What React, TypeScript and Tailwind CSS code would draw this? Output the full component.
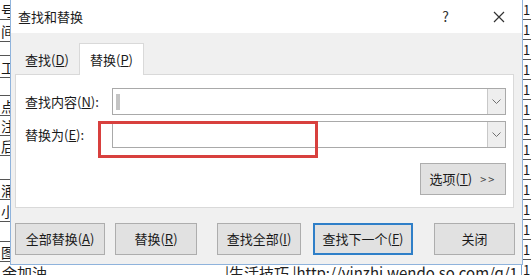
import React from 'react';

const font = { fontFamily: '"Noto Sans CJK SC", "Noto Sans", sans-serif' };

const leftRows = [
  { ch: '号', h: 'h-[20px]' },
  { ch: '间', h: 'h-[22px]' },
  { ch: '', h: 'h-[14px]' },
  { ch: '工', h: 'h-[22px]' },
  { ch: '', h: 'h-[18px]' },
  { ch: '点', h: 'h-[20px]' },
  { ch: '注', h: 'h-[20px]' },
  { ch: '后', h: 'h-[20px]' },
  { ch: '', h: 'h-[24px]' },
  { ch: '涌', h: 'h-[20px]' },
  { ch: '小', h: 'h-[22px]' },
  { ch: '', h: 'h-[20px]' },
  { ch: '图', h: 'h-[20px]' },
];

const rightRows = Array.from({ length: 14 }, () => 'h-[20px]');

const Combo: React.FC<{ caret?: boolean }> = ({ caret }) => (
  <div className="flex h-[27px] w-[394px] border border-[#a9a9a9] bg-white">
    <div className="flex flex-1 items-center pl-[3px]">
      {caret && <div className="h-[16px] w-[4px] bg-[#c4c4c4]" />}
    </div>
    <div className="flex w-[18px] items-center justify-center border-l border-[#c8c8c8] bg-[#eeeeee]">
      <svg width="9" height="6" viewBox="0 0 9 6" fill="none" stroke="#707070" strokeWidth="1">
        <path d="M0.5 0.5 L4.5 4.5 L8.5 0.5" />
      </svg>
    </div>
  </div>
);

const Btn: React.FC<{ w: string; primary?: boolean; children: React.ReactNode }> = ({ w, primary, children }) => (
  <div
    className={`flex h-[32px] ${w} items-center justify-center bg-[#e1e1e1] text-[13px] text-[#1a1a1a] ${
      primary ? 'border-2 border-[#2f7fc8]' : 'border border-[#adadad]'
    }`}
  >
    {children}
  </div>
);

export default function App() {
  return (
    <div className="relative h-[275px] w-[531px] overflow-hidden bg-white text-[#1a1a1a]" style={font}>
      {/* document behind the dialog */}
      <div className="absolute left-0 top-0 flex w-[14px] flex-col border-r border-[#7aa6d6] text-[14px] leading-none">
        {leftRows.map((r, i) => (
          <div key={i} className={`${r.h} flex items-center border-b border-[#555] pl-[1px]`}>
            {r.ch}
          </div>
        ))}
      </div>
      <div className="absolute right-0 top-0 flex w-[10px] flex-col border-l border-[#7aa6d6] text-[13px] leading-none">
        {rightRows.map((h, i) => (
          <div key={i} className={`${h} flex items-center border-b border-[#555] pl-[1px]`}>
            1
          </div>
        ))}
      </div>
      <div className="absolute bottom-[-5px] left-0 flex w-full items-end text-[15px] leading-none text-[#222]">
        <span className="w-[225px] pl-[2px]">余加油</span>
        <span className="whitespace-nowrap">|生活技巧 |http://yinzhi.wendo.so.com/q/1</span>
      </div>

      {/* dialog */}
      <div className="absolute left-[10px] top-0 flex h-[265px] w-[513px] flex-col border border-t-0 border-[#8fb3dc] bg-[#f0f0f0]">
        <div className="flex h-[33px] items-center bg-white pl-[7px] text-[13px]">
          <span>查找和替换</span>
          <span className="ml-auto mr-[44px] text-[14px] text-[#333]">?</span>
          <svg className="mr-[17px]" width="12" height="12" viewBox="0 0 12 12" stroke="#333" strokeWidth="1.2">
            <path d="M1 1 L11 11 M11 1 L1 11" />
          </svg>
        </div>

        <div className="ml-[4px] mt-[10px] flex h-[31px] items-end text-[13px]">
          <div className="flex h-[28px] w-[64px] items-center justify-center">
            查找(<u>D</u>)
          </div>
          <div className="relative z-10 mb-[-1px] flex h-[32px] w-[65px] items-center justify-center border border-b-0 border-[#d9d9d9] bg-white">
            替换(<u>P</u>)
          </div>
        </div>

        <div className="ml-[4px] flex h-[134px] w-[499px] flex-col border border-[#d9d9d9] bg-white pl-[9px] text-[13px]">
          <div className="mt-[13px] flex items-center">
            <span className="w-[87px]">
              查找内容(<u>N</u>):
            </span>
            <Combo caret />
          </div>
          <div className="mt-[6px] flex items-center">
            <span className="w-[87px]">
              替换为(<u>E</u>):
            </span>
            <Combo />
          </div>
          <div className="mt-[15px] flex justify-end pr-[7px]">
            <Btn w="w-[86px]">
              选项(<u>T</u>)
              <span className="ml-[8px] text-[11px] tracking-[2px] text-[#444]">&gt;&gt;</span>
            </Btn>
          </div>
        </div>

        <div className="ml-[4px] mt-[15px] flex items-center">
          <Btn w="w-[90px]">
            全部替换(<u>A</u>)
          </Btn>
          <div className="ml-[10px]">
            <Btn w="w-[82px]">
              替换(<u>R</u>)
            </Btn>
          </div>
          <div className="ml-[20px]">
            <Btn w="w-[84px]">
              查找全部(<u>I</u>)
            </Btn>
          </div>
          <div className="ml-[12px]">
            <Btn w="w-[100px]" primary>
              查找下一个(<u>F</u>)
            </Btn>
          </div>
          <div className="ml-[21px]">
            <Btn w="w-[81px]">关闭</Btn>
          </div>
        </div>
      </div>

      {/* red highlight box */}
      <div className="pointer-events-none absolute left-[98px] top-[121px] h-[37px] w-[220px] border-[3px] border-[#d8403e]" />
    </div>
  );
}
